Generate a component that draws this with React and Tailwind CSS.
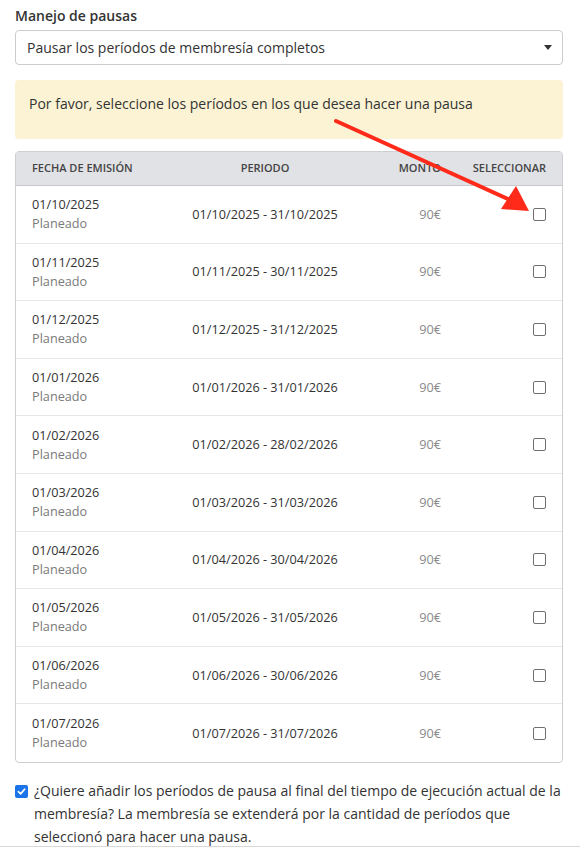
import React from 'react';

const rows = [
    ["01/10/2025", "01/10/2025 - 31/10/2025"],
    ["01/11/2025", "01/11/2025 - 30/11/2025"],
    ["01/12/2025", "01/12/2025 - 31/12/2025"],
    ["01/01/2026", "01/01/2026 - 31/01/2026"],
    ["01/02/2026", "01/02/2026 - 28/02/2026"],
    ["01/03/2026", "01/03/2026 - 31/03/2026"],
    ["01/04/2026", "01/04/2026 - 30/04/2026"],
    ["01/05/2026", "01/05/2026 - 31/05/2026"],
    ["01/06/2026", "01/06/2026 - 30/06/2026"],
    ["01/07/2026", "01/07/2026 - 31/07/2026"],
];

const cols = "grid grid-cols-[137px_192px_80px_1fr] items-center px-4";

const App = () => {
    return (
        <div className="relative w-[580px] h-[848px] overflow-hidden bg-white text-[#333] font-['Open_Sans',sans-serif] text-[14px]">
            <div className="pl-[15px] pr-[17px] pt-[6px]">
                <div className="font-semibold leading-[20px] text-[#333]">Manejo de pausas</div>

                <div className="mt-[4px] flex h-[35px] items-center justify-between rounded-[4px] border border-[#ccc] pl-[11px] pr-[10px]">
                    <span>Pausar los períodos de membresía completos</span>
                    <span className="h-0 w-0 border-x-[4px] border-t-[5px] border-x-transparent border-t-[#333]"></span>
                </div>

                <div className="mt-[15px] flex h-[59px] items-center rounded-[4px] bg-[#fbf3d4] px-[14px] pb-[12px]">
                    Por favor, seleccione los períodos en los que desea hacer una pausa
                </div>

                <div className="mt-[12px] overflow-hidden rounded-[4px] border border-[#cfcfd2]">
                    <div className={cols + " h-[34px] bg-[#e1e2e6] border-b border-[#c9cacd] text-[11px] font-semibold uppercase text-[#444]"}>
                        <div>Fecha de emisión</div>
                        <div className="text-center">Periodo</div>
                        <div className="text-right">Monto</div>
                        <div className="text-right">Seleccionar</div>
                    </div>
                    {rows.map((r, i) => (
                        <div key={i} className={cols + " h-[57.6px] text-[12.7px] " + (i < rows.length - 1 ? "border-b border-[#e6e6e8]" : "")}>
                            <div className="leading-[19px]">
                                <div>{r[0]}</div>
                                <div className="text-[#7a7a7a]">Planeado</div>
                            </div>
                            <div className="text-center">{r[1]}</div>
                            <div className="text-right text-[#8a8a8a]">90€</div>
                            <div className="flex justify-end">
                                <span className="block h-[13px] w-[13px] rounded-[2px] border border-[#6f6f6f] bg-white"></span>
                            </div>
                        </div>
                    ))}
                </div>

                <div className="mt-[16px] flex items-start gap-[6px] leading-[23px]">
                    <span className="mt-[6px] flex h-[13px] w-[13px] shrink-0 items-center justify-center rounded-[2px] bg-[#1a73e8]">
                        <svg width="9" height="9" viewBox="0 0 10 10">
                            <path d="M1.5 5.2 L4 7.6 L8.6 2.4" fill="none" stroke="white" strokeWidth="1.8" strokeLinecap="round" strokeLinejoin="round"/>
                        </svg>
                    </span>
                    <span>¿Quiere añadir los períodos de pausa al final del tiempo de ejecución actual de la membresía? La membresía se extenderá por la cantidad de períodos que seleccionó para hacer una pausa.</span>
                </div>
            </div>
            <div className="absolute bottom-[1px] left-0 h-[1px] w-full bg-[#d8d8d8]"></div>

            <svg className="pointer-events-none absolute left-0 top-0" width="580" height="848">
                <line x1="336" y1="121" x2="510" y2="200" stroke="#ff2a1a" strokeWidth="4" strokeLinecap="round"/>
                <polygon points="529,211 501,209 516,186" fill="#ff2a1a"/>
            </svg>
        </div>
    );
}

export default App;
